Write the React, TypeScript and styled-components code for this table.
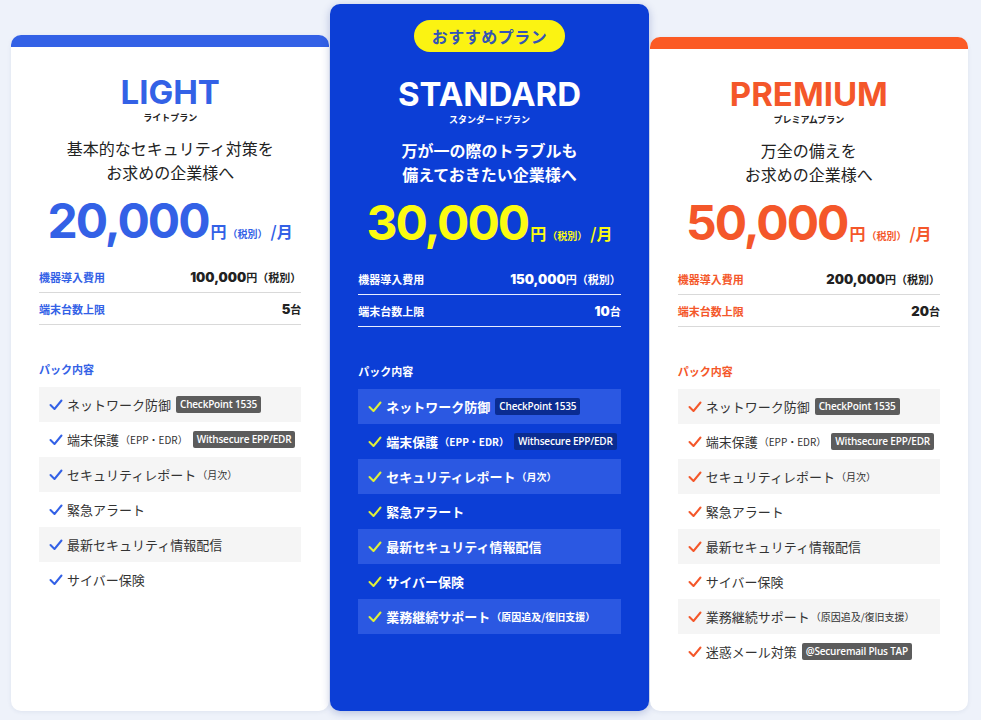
import React, { FC } from 'react';
import styled, { createGlobalStyle } from 'styled-components';

const GlobalStyle = createGlobalStyle`
  html, body {
    margin: 0;
    padding: 0;
    background: #eef2fa;
  }
  body {
    font-family: "Noto Sans CJK JP", "Noto Sans", sans-serif;
    color: #222;
  }
`;

type Theme = 'light' | 'standard' | 'premium';

interface Palette {
  accent: string;
  bg: string;
  title: string;
  label: string;
  price: string;
  check: string;
  stripe: string;
  divider: string;
  tagBg: string;
}

const palettes: Record<Theme, Palette> = {
  light: {
    accent: '#3361e6',
    bg: '#fff',
    title: '#3361e6',
    label: '#3361e6',
    price: '#3361e6',
    check: '#3361e6',
    stripe: '#f5f5f5',
    divider: '#d9d9d9',
    tagBg: '#5c5c5c',
  },
  standard: {
    accent: '#0c3ed6',
    bg: '#0c3ed6',
    title: '#fff',
    label: '#fff',
    price: '#fbfb12',
    check: '#dff03a',
    stripe: '#2b58e2',
    divider: '#e8edff',
    tagBg: '#0a2c92',
  },
  premium: {
    accent: '#fb5a24',
    bg: '#fff',
    title: '#f4572a',
    label: '#f4572a',
    price: '#f4572a',
    check: '#f4572a',
    stripe: '#f5f5f5',
    divider: '#d9d9d9',
    tagBg: '#5c5c5c',
  },
};

const Page = styled.div`
  display: flex;
  align-items: stretch;
  gap: 1px;
  padding: 4px 13px 9px 11px;
  height: 720px;
  box-sizing: border-box;
`;

const Card = styled.div<{ $p: Palette; $top: number; $featured?: boolean }>`
  flex: 1 1 0;
  margin-top: ${p => p.$top}px;
  background: ${p => p.$p.bg};
  border-radius: 10px;
  overflow: hidden;
  display: flex;
  flex-direction: column;
  box-shadow: ${p => (p.$featured ? '0 2px 8px rgba(10, 40, 140, 0.25)' : '0 1px 4px rgba(40, 60, 120, 0.08)')};
`;

const TopBar = styled.div<{ $color: string }>`
  height: 12px;
  background: ${p => p.$color};
`;

const Body = styled.div<{ $pt: number }>`
  padding: ${p => p.$pt}px 28px 20px 28px;
  display: flex;
  flex-direction: column;
`;

const Recommend = styled.div`
  align-self: center;
  background: #fbf312;
  color: #3455b4;
  font-weight: 700;
  font-size: 16px;
  line-height: 32px;
  height: 32px;
  padding: 0 18px;
  border-radius: 16px;
  margin-bottom: 24px;
  letter-spacing: 0.5px;
`;

const Title = styled.div<{ $color: string }>`
  text-align: center;
  font-family: Inter, "Noto Sans", sans-serif;
  font-weight: 700;
  font-size: 33px;
  line-height: 36px;
  color: ${p => p.$color};
`;

const SubTitle = styled.div<{ $color: string }>`
  text-align: center;
  font-size: 9px;
  line-height: 12px;
  font-weight: 700;
  color: ${p => p.$color};
  margin-top: 2px;
`;

const Tagline = styled.div<{ $color: string; $bold?: boolean }>`
  text-align: center;
  font-size: 16px;
  line-height: 24px;
  font-weight: ${p => (p.$bold ? 700 : 400)};
  color: ${p => p.$color};
  margin-top: 12px;
`;

const PriceRow = styled.div<{ $color: string }>`
  display: flex;
  justify-content: center;
  align-items: baseline;
  color: ${p => p.$color};
  font-weight: 700;
  margin-top: 8px;
  height: 58px;
`;

const PriceNum = styled.span`
  font-family: Inter, sans-serif;
  font-size: 48px;
  line-height: 58px;
  letter-spacing: -2px;
`;

const Yen = styled.span`
  font-size: 16px;
  margin-left: 2px;
`;

const Tax = styled.span`
  font-size: 10px;
  margin: 0 1px 0 1px;
`;

const InfoTable = styled.div`
  margin-top: 11px;
`;

const InfoRow = styled.div<{ $divider: string }>`
  display: flex;
  justify-content: space-between;
  align-items: center;
  height: 31px;
  border-bottom: 1px solid ${p => p.$divider};
`;

const InfoLabel = styled.span<{ $color: string }>`
  font-size: 11px;
  font-weight: 700;
  color: ${p => p.$color};
`;

const InfoValue = styled.span<{ $color: string }>`
  color: ${p => p.$color};
  font-weight: 700;
  font-size: 11px;
  b {
    font-family: Inter, sans-serif;
    font-size: 13px;
  }
`;

const PackLabel = styled.div<{ $color: string }>`
  font-size: 11px;
  line-height: 16px;
  font-weight: 700;
  color: ${p => p.$color};
  margin-top: 36px;
  margin-bottom: 10px;
`;

const ItemList = styled.ul`
  list-style: none;
  margin: 0;
  padding: 0;
`;

const Item = styled.li<{ $stripe: string; $color: string; $bold?: boolean }>`
  display: flex;
  align-items: center;
  height: 35px;
  padding: 0 10px;
  background: ${p => p.$stripe};
  color: ${p => p.$color};
  font-size: 13px;
  font-weight: ${p => (p.$bold ? 700 : 400)};
  white-space: nowrap;
  small {
    font-size: 10px;
    margin-left: 1px;
  }
`;

const Check = styled.svg`
  width: 14px;
  height: 12px;
  margin-right: 4px;
  flex: none;
`;

const Tag = styled.span<{ $bg: string }>`
  background: ${p => p.$bg};
  color: #fff;
  font-family: "Open Sans", "Noto Sans", sans-serif;
  font-weight: 600;
  font-size: 10px;
  line-height: 17px;
  padding: 0 4px;
  border-radius: 2px;
  margin-left: 5px;
  letter-spacing: -0.2px;
`;

interface Feature {
  text: string;
  note?: string;
  tag?: string;
}

interface Plan {
  theme: Theme;
  name: string;
  kana: string;
  tagline: [string, string];
  price: string;
  setup: string;
  units: string;
  top: number;
  features: Feature[];
}

const baseFeatures: Feature[] = [
  { text: 'ネットワーク防御', tag: 'CheckPoint 1535' },
  { text: '端末保護', note: '（EPP・EDR）', tag: 'Withsecure EPP/EDR' },
  { text: 'セキュリティレポート', note: '（月次）' },
  { text: '緊急アラート' },
  { text: '最新セキュリティ情報配信' },
  { text: 'サイバー保険' },
];

const bcp: Feature = { text: '業務継続サポート', note: '（原因追及/復旧支援）' };

const plans: Plan[] = [
  {
    theme: 'light',
    name: 'LIGHT',
    kana: 'ライトプラン',
    tagline: ['基本的なセキュリティ対策を', 'お求めの企業様へ'],
    price: '20,000',
    setup: '100,000',
    units: '5',
    top: 31,
    features: baseFeatures,
  },
  {
    theme: 'standard',
    name: 'STANDARD',
    kana: 'スタンダードプラン',
    tagline: ['万が一の際のトラブルも', '備えておきたい企業様へ'],
    price: '30,000',
    setup: '150,000',
    units: '10',
    top: 0,
    features: [...baseFeatures, bcp],
  },
  {
    theme: 'premium',
    name: 'PREMIUM',
    kana: 'プレミアムプラン',
    tagline: ['万全の備えを', 'お求めの企業様へ'],
    price: '50,000',
    setup: '200,000',
    units: '20',
    top: 33,
    features: [...baseFeatures, bcp, { text: '迷惑メール対策', tag: '@Securemail Plus TAP' }],
  },
];

const CheckIcon: FC<{ color: string }> = ({ color }) => (
  <Check viewBox="0 0 14 12">
    <polyline points="1.5,6 5.5,10 12.5,1.5" fill="none" stroke={color} strokeWidth="2" strokeLinecap="round" strokeLinejoin="round" />
  </Check>
);

const PlanCard: FC<{ plan: Plan }> = ({ plan }) => {
  const p = palettes[plan.theme];
  const featured = plan.theme === 'standard';
  const ink = featured ? '#fff' : '#222';
  return (
    <Card $p={p} $top={plan.top} $featured={featured}>
      {!featured && <TopBar $color={p.accent} />}
      <Body $pt={featured ? 16 : 27}>
        {featured && <Recommend>おすすめプラン</Recommend>}
        <Title $color={p.title}>{plan.name}</Title>
        <SubTitle $color={ink}>{plan.kana}</SubTitle>
        <Tagline $color={ink} $bold={featured}>
          {plan.tagline[0]}
          <br />
          {plan.tagline[1]}
        </Tagline>
        <PriceRow $color={p.price}>
          <PriceNum>{plan.price}</PriceNum>
          <Yen>円</Yen>
          <Tax>（税別）</Tax>
          <Yen>/月</Yen>
        </PriceRow>
        <InfoTable>
          <InfoRow $divider={p.divider}>
            <InfoLabel $color={p.label}>機器導入費用</InfoLabel>
            <InfoValue $color={ink}>
              <b>{plan.setup}</b>円（税別）
            </InfoValue>
          </InfoRow>
          <InfoRow $divider={p.divider}>
            <InfoLabel $color={p.label}>端末台数上限</InfoLabel>
            <InfoValue $color={ink}>
              <b>{plan.units}</b>台
            </InfoValue>
          </InfoRow>
        </InfoTable>
        <PackLabel $color={p.label}>パック内容</PackLabel>
        <ItemList>
          {plan.features.map((f, i) => (
            <Item key={f.text} $stripe={i % 2 === 0 ? p.stripe : 'transparent'} $color={featured ? '#fff' : '#333'} $bold={featured}>
              <CheckIcon color={p.check} />
              {f.text}
              {f.note && <small>{f.note}</small>}
              {f.tag && <Tag $bg={p.tagBg}>{f.tag}</Tag>}
            </Item>
          ))}
        </ItemList>
      </Body>
    </Card>
  );
};

const App: FC = () => (
  <>
    <GlobalStyle />
    <Page>
      {plans.map(plan => (
        <PlanCard key={plan.theme} plan={plan} />
      ))}
    </Page>
  </>
);

export default App;
